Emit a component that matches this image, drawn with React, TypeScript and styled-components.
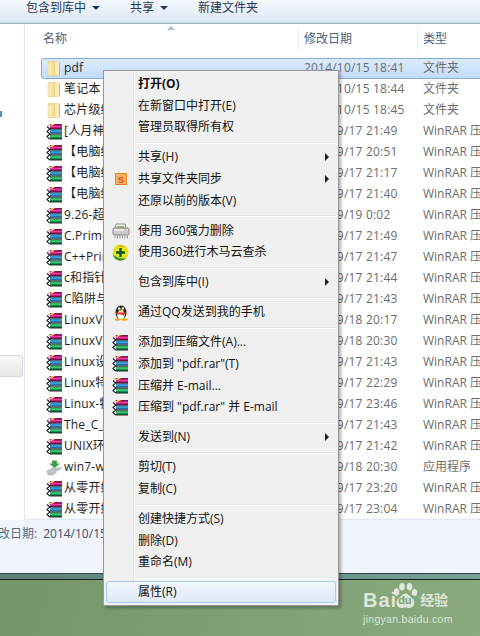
import styled, { createGlobalStyle } from "styled-components";

const FONT = `"Open Sans", "Noto Sans CJK SC", sans-serif`;

const GlobalStyle = createGlobalStyle`
  html, body {
    margin: 0;
    padding: 0;
    overflow: hidden;
    background: #7f9f74;
  }
`;

const rows = [
  { icon: "folder", name: "笔记本", date: "2014/10/15 18:44", type: "文件夹" },
  { icon: "folder", name: "芯片级维修", date: "2014/10/15 18:45", type: "文件夹" },
  { icon: "rar", name: "[人月神话", date: "2014/9/17 21:49", type: "WinRAR 压缩文件" },
  { icon: "rar", name: "【电脑维修", date: "2014/9/17 20:51", type: "WinRAR 压缩文件" },
  { icon: "rar", name: "【电脑维修", date: "2014/9/17 21:17", type: "WinRAR 压缩文件" },
  { icon: "rar", name: "【电脑维修", date: "2014/9/17 21:40", type: "WinRAR 压缩文件" },
  { icon: "rar", name: "9.26-超级", date: "2014/9/19 0:02", type: "WinRAR 压缩文件" },
  { icon: "rar", name: "C.Primer", date: "2014/9/17 21:49", type: "WinRAR 压缩文件" },
  { icon: "rar", name: "C++Primer", date: "2014/9/17 21:47", type: "WinRAR 压缩文件" },
  { icon: "rar", name: "c和指针", date: "2014/9/17 21:44", type: "WinRAR 压缩文件" },
  { icon: "rar", name: "C陷阱与缺陷", date: "2014/9/17 21:43", type: "WinRAR 压缩文件" },
  { icon: "rar", name: "LinuxVI", date: "2014/9/18 20:17", type: "WinRAR 压缩文件" },
  { icon: "rar", name: "LinuxVI", date: "2014/9/18 20:30", type: "WinRAR 压缩文件" },
  { icon: "rar", name: "Linux设备", date: "2014/9/17 21:43", type: "WinRAR 压缩文件" },
  { icon: "rar", name: "Linux特性", date: "2014/9/17 22:29", type: "WinRAR 压缩文件" },
  { icon: "rar", name: "Linux-特性", date: "2014/9/17 23:46", type: "WinRAR 压缩文件" },
  { icon: "rar", name: "The_C_", date: "2014/9/17 21:43", type: "WinRAR 压缩文件" },
  { icon: "rar", name: "UNIX环境", date: "2014/9/17 21:42", type: "WinRAR 压缩文件" },
  { icon: "setup", name: "win7-w", date: "2014/9/18 20:30", type: "应用程序" },
  { icon: "rar", name: "从零开始", date: "2014/9/17 23:20", type: "WinRAR 压缩文件" },
  { icon: "rar", name: "从零开始", date: "2014/9/17 23:04", type: "WinRAR 压缩文件" }
];

const menuGroups = [
  [
    { label: "打开(O)", bold: true },
    { label: "在新窗口中打开(E)" },
    { label: "管理员取得所有权" }
  ],
  [
    { label: "共享(H)", arrow: true },
    { label: "共享文件夹同步", icon: "sync", arrow: true },
    { label: "还原以前的版本(V)" }
  ],
  [
    { label: "使用 360强力删除", icon: "shredder" },
    { label: "使用360进行木马云查杀", icon: "shield" }
  ],
  [{ label: "包含到库中(I)", arrow: true }],
  [{ label: "通过QQ发送到我的手机", icon: "qq" }],
  [
    { label: "添加到压缩文件(A)...", icon: "rar" },
    { label: "添加到 \"pdf.rar\"(T)", icon: "rar" },
    { label: "压缩并 E-mail...", icon: "rar" },
    { label: "压缩到 \"pdf.rar\" 并 E-mail", icon: "rar" }
  ],
  [{ label: "发送到(N)", arrow: true }],
  [{ label: "剪切(T)" }, { label: "复制(C)" }],
  [
    { label: "创建快捷方式(S)" },
    { label: "删除(D)" },
    { label: "重命名(M)" }
  ],
  [{ label: "属性(R)", active: true }]
] as {
  label: string;
  bold?: boolean;
  arrow?: boolean;
  icon?: string;
  active?: boolean;
}[][];

const FolderIcon = () => (
  <svg width="16" height="17" viewBox="0 0 16 17">
    <defs>
      <linearGradient id="fold" x1="0" x2="1" y1="0" y2="0">
        <stop offset="0" stopColor="#fbf2c0" />
        <stop offset="1" stopColor="#f1dc92" />
      </linearGradient>
    </defs>
    <path d="M2 1.500h11.500v14H2z" fill="#e4c678" />
    <path d="M8.500 2h4.500v13h-4.500z" fill="#f8ecb8" />
    <path d="M2 2.500l6.500 -1.500v14.500H2z" fill="url(#fold)" stroke="#e2c77f" strokeWidth="0.5" />
    <path d="M13.500 2v13.500" stroke="#d0ae5c" strokeWidth="0.8" />
  </svg>
);

const RarIcon = () => (
  <svg width="17" height="17" viewBox="0 0 17 17">
    <path d="M1 3.500L4 1h12v5H4z" fill="#7d1557" />
    <rect x="4" y="2" width="12" height="4" fill="#b4186f" />
    <rect x="4" y="3" width="12" height="1.200" fill="#ec3fa4" />
    <path d="M3 2.500l3 -1.500h3l-3 2z" fill="#e9d44c" />
    <rect x="4" y="6.500" width="12" height="4" fill="#1f6fae" />
    <rect x="4" y="7.500" width="12" height="1.200" fill="#4fb2e6" />
    <rect x="4" y="11.500" width="12" height="4.500" fill="#0f8e4a" />
    <rect x="4" y="12.500" width="12" height="1.200" fill="#58d488" />
    <path d="M4 6H16M4 11H16M4 16H16" stroke="#111" strokeWidth="0.9" />
    <path d="M1 3.500L4 6 1 8.500 4 11 1 13.500 4 16" fill="none" stroke="#1a1a1a" strokeWidth="1.100" />
    <path d="M1 3.500L4 1v5zM1 8.500L4 6v5zM1 13.500L4 11v5z" fill="#f4f4f4" fillOpacity="0.85" />
    <path d="M1 3.500L4 6 1 8.500 4 11 1 13.500 4 16" fill="none" stroke="#1a1a1a" strokeWidth="0.900" />
  </svg>
);

const SetupIcon = () => (
  <svg width="17" height="17" viewBox="0 0 17 17">
    <path d="M1 12l6 -3h9l-4 2.500H8.500l2 1.500L7 16H2z" fill="#c0c4c4" stroke="#9a9e9e" strokeWidth="0.500" />
    <path d="M6 1.500h5v3h3l-5.500 4.500L3 4.500h3z" fill="#3f9a4b" stroke="#b5d2b8" strokeWidth="0.500" />
  </svg>
);

const SyncIcon = () => (
  <svg width="16" height="16" viewBox="0 0 16 16">
    <rect x="1" y="1" width="14" height="14" fill="#fff" />
    <rect x="2.500" y="2.500" width="11" height="11" fill="#f4b36a" stroke="#e77d12" />
    <text x="8" y="11.500" fontSize="9" fontWeight="700" textAnchor="middle" fill="#c9510c" fontFamily="Liberation Sans, sans-serif">
      S
    </text>
  </svg>
);

const ShredderIcon = () => (
  <svg width="18" height="16" viewBox="0 0 18 16">
    <path d="M4 1h9l1 4H3z" fill="#ececec" stroke="#949494" />
    <rect x="5" y="3" width="7" height="2" fill="#a9b77c" />
    <rect x="1" y="5" width="16" height="7" rx="1.500" fill="#c9cccc" stroke="#868686" />
    <rect x="2" y="6" width="14" height="2" fill="#eeeeee" />
    <path d="M3 12.500v3M5.500 12.500v3M8 12.500v3M10.500 12.500v3M13 12.500v3M15.500 12.500v3" stroke="#979797" />
    <path d="M12 7h3" stroke="#d88" />
  </svg>
);

const ShieldIcon = () => (
  <svg width="17" height="17" viewBox="0 0 17 17">
    <circle cx="8.500" cy="8.500" r="8" fill="#e3e21f" />
    <path d="M0.800 10.500a8 8 0 0 0 13.500 3.800C9 15 5 14 0.800 10.500z" fill="#3f9426" />
    <path d="M5 2a8 8 0 0 1 8 1.500C10 2.500 7.500 2.500 5 2z" fill="#d58a16" />
    <path d="M7.300 4h2.400v3.300H13v2.400H9.700V13H7.300V9.700H4V7.300h3.300z" fill="#15561a" />
  </svg>
);

const QqIcon = () => (
  <svg width="16" height="17" viewBox="0 0 16 17">
    <ellipse cx="8" cy="8.500" rx="5.500" ry="7" fill="#1c1c1c" />
    <ellipse cx="8" cy="11" rx="3.800" ry="4.500" fill="#fff" />
    <circle cx="6.200" cy="4.500" r="1.200" fill="#fff" />
    <circle cx="9.800" cy="4.500" r="1.200" fill="#fff" />
    <ellipse cx="8" cy="6.500" rx="2.600" ry="1" fill="#f0b020" />
    <path d="M3 8.500h10l.5 1.300-2.500 .7v2l-1.500 -1.800-6.500 -.7z" fill="#e02a1c" />
    <ellipse cx="4.500" cy="15.500" rx="3" ry="1.300" fill="#f0a818" />
    <ellipse cx="11.500" cy="15.500" rx="3" ry="1.300" fill="#f0a818" />
  </svg>
);

const PawIcon = () => (
  <svg width="25" height="26" viewBox="0 0 25 26" fill="#fff" fillOpacity="0.72">
    <ellipse cx="3.500" cy="9" rx="2.800" ry="3.800" />
    <ellipse cx="9" cy="3.800" rx="2.800" ry="3.800" />
    <ellipse cx="16.500" cy="3.800" rx="2.800" ry="3.800" />
    <ellipse cx="21.500" cy="9.500" rx="2.800" ry="3.600" />
    <path d="M12.500 10.500c3.500 0 4.500 3.500 7 5 3.500 2.500 2 9-3 9.500-1.500 0-2.500-.8-4-.8s-2.500 .8-4.500 .8c-5-.5-6-7-2.500-9.500 2.500-1.500 3.500-5 7-5z" />
  </svg>
);

const iconFor = (name?: string) => {
  switch (name) {
    case "folder":
      return <FolderIcon />;
    case "rar":
      return <RarIcon />;
    case "setup":
      return <SetupIcon />;
    case "sync":
      return <SyncIcon />;
    case "shredder":
      return <ShredderIcon />;
    case "shield":
      return <ShieldIcon />;
    case "qq":
      return <QqIcon />;
    default:
      return null;
  }
};

const App = () => (
  <Page>
    <GlobalStyle />
    <Toolbar>
      <ToolButton $width={104}>
        包含到库中 <Caret />
      </ToolButton>
      <ToolButton $width={68}>
        共享 <Caret />
      </ToolButton>
      <ToolButton>新建文件夹</ToolButton>
    </Toolbar>
    <Explorer>
      <NavPane>
        <NavMark />
        <NavSelected />
      </NavPane>
      <Content>
        <HeaderRow>
          <SortArrow />
          <HeaderCell>名称</HeaderCell>
          <HeaderCell $divider>修改日期</HeaderCell>
          <HeaderCell $divider>类型</HeaderCell>
        </HeaderRow>
        <FileRow $selected>
          <NameCell>
            <IconSlot>
              <FolderIcon />
            </IconSlot>
            pdf
          </NameCell>
          <DateCell>2014/10/15 18:41</DateCell>
          <TypeCell>文件夹</TypeCell>
        </FileRow>
        {rows.map((row, i) => (
          <FileRow key={i}>
            <NameCell>
              <IconSlot>{iconFor(row.icon)}</IconSlot>
              {row.name}
            </NameCell>
            <DateCell>{row.date}</DateCell>
            <TypeCell>{row.type}</TypeCell>
          </FileRow>
        ))}
      </Content>
    </Explorer>
    <Details>
      <DetailLabel>修改日期:</DetailLabel>
      <DetailValue>2014/10/15 18:41</DetailValue>
    </Details>
    <WindowEdge />
    <Desktop />

    <Menu>
      {menuGroups.map((group, g) => (
        <div key={g}>
          {g > 0 && <MenuSeparator />}
          {group.map((item) => (
            <MenuItem key={item.label} $active={item.active}>
              <MenuIcon>{iconFor(item.icon)}</MenuIcon>
              <MenuLabel $bold={item.bold}>{item.label}</MenuLabel>
              {item.arrow && <MenuArrow />}
            </MenuItem>
          ))}
        </div>
      ))}
    </Menu>

    <Watermark>
      <BrandLine>
        <BrandText>Bai</BrandText>
        <PawBox>
          <PawIcon />
          <PawText>du</PawText>
        </PawBox>
        <BrandCn>经验</BrandCn>
      </BrandLine>
      <BrandUrl>jingyan.baidu.com</BrandUrl>
    </Watermark>
  </Page>
);

const Page = styled.div`
  position: relative;
  width: 480px;
  height: 636px;
  overflow: hidden;
  display: flex;
  flex-direction: column;
  font: 12px/16px ${FONT};
  background: #fff;
`;

const Toolbar = styled.div`
  flex: 0 0 24px;
  box-sizing: border-box;
  display: flex;
  align-items: flex-start;
  padding: 0 0 0 26px;
  background: linear-gradient(#f4f8fc, #dce7f4);
  border-bottom: 1px solid #a5b3c6;
  box-shadow: inset 0 -1px 0 #c6d3e3;
  color: #1e395b;
`;

const ToolButton = styled.div<{ $width?: number }>`
  width: ${(p) => (p.$width ? `${p.$width}px` : "auto")};
  display: flex;
  align-items: center;
  gap: 6px;
  height: 15px;
  font-size: 12px;
`;

const Caret = styled.span`
  width: 0;
  height: 0;
  border-left: 4px solid transparent;
  border-right: 4px solid transparent;
  border-top: 4px solid #1e395b;
`;

const Explorer = styled.div`
  flex: 0 0 494px;
  display: flex;
  background: #fff;
  box-shadow: inset 0 -2px 2px -1px #d6e0f0;
`;

const NavPane = styled.div`
  position: relative;
  flex: 0 0 24px;
  border-right: 1px solid #d9e6f4;
  background: #fff;
`;

const NavMark = styled.div`
  position: absolute;
  left: 0;
  top: 87px;
  width: 2px;
  height: 6px;
  background: #4d8ecb;
`;

const NavSelected = styled.div`
  position: absolute;
  left: 0;
  top: 331px;
  width: 23px;
  height: 22px;
  box-sizing: border-box;
  border: 1px solid #d9d9d9;
  border-left: 0;
  border-radius: 0 3px 3px 0;
  background: linear-gradient(#f8f8f8, #e8e8e8);
`;

const Content = styled.div`
  flex: 1;
  min-width: 0;
  overflow: hidden;
`;

const HeaderRow = styled.div`
  position: relative;
  height: 34px;
  display: grid;
  grid-template-columns: 273px 119px 1fr;
  align-items: center;
  color: #4c607a;
`;

const SortArrow = styled.span`
  position: absolute;
  left: 142px;
  top: 2px;
  width: 0;
  height: 0;
  border-left: 4px solid transparent;
  border-right: 4px solid transparent;
  border-bottom: 4px solid #a6c0dc;
`;

const HeaderCell = styled.div<{ $divider?: boolean }>`
  height: 24px;
  line-height: 24px;
  margin-top: -4px;
  padding-left: ${(p) => (p.$divider ? "5px" : "18px")};
  border-left: ${(p) => (p.$divider ? "1px solid #e8eef5" : "0")};
  font-size: 12px;
`;

const FileRow = styled.div<{ $selected?: boolean }>`
  height: 21px;
  box-sizing: border-box;
  margin-left: 16px;
  margin-right: -4px;
  padding-bottom: 1px;
  display: grid;
  grid-template-columns: 257px 119px 1fr;
  align-items: center;
  white-space: nowrap;
  border: 1px solid ${(p) => (p.$selected ? "#84acdd" : "transparent")};
  border-radius: 3px;
  background: ${(p) =>
    p.$selected ? "linear-gradient(#dcebfc, #c2dcfd)" : "transparent"};
`;

const NameCell = styled.div`
  display: flex;
  align-items: center;
  color: #1e1e1e;
  overflow: hidden;
  letter-spacing: 0.2px;
`;

const IconSlot = styled.span`
  flex: 0 0 22px;
  display: flex;
  justify-content: center;
  padding-left: 2px;
  box-sizing: border-box;
`;

const DateCell = styled.div`
  padding-left: 5px;
  color: #6d6d6d;
  letter-spacing: 0.2px;
`;

const TypeCell = styled.div`
  padding-left: 5px;
  color: #6d6d6d;
`;

const Details = styled.div`
  flex: 0 0 53px;
  box-sizing: border-box;
  display: flex;
  gap: 6px;
  padding-top: 6px;
  background: #f0f4fc;
  white-space: nowrap;
  overflow: hidden;
`;

const DetailLabel = styled.span`
  margin-left: -14px;
  color: #5b6b80;
`;

const DetailValue = styled.span`
  color: #3b4c68;
`;

const WindowEdge = styled.div`
  flex: 0 0 7px;
  box-sizing: border-box;
  background: linear-gradient(90deg, #5f8078, #76a09b);
  border-top: 1px solid #33443f;
  border-bottom: 1px solid #14201c;
`;

const Desktop = styled.div`
  flex: 1;
  background: linear-gradient(100deg, #74966b, #8aaa7e);
`;

const Menu = styled.div`
  position: absolute;
  left: 103px;
  top: 70px;
  width: 236px;
  height: 536px;
  box-sizing: border-box;
  padding: 2px 2px 0;
  border: 1px solid #979797;
  background: linear-gradient(90deg, #f0f0f0 29px, #e6e6e6 29px, #e6e6e6 30px, #fbfbfb 30px, #fbfbfb 31px, #f0f0f0 31px);
  box-shadow: 2px 2px 3px rgba(0, 0, 0, 0.3);
`;

const MenuItem = styled.div<{ $active?: boolean }>`
  height: 21.7px;
  box-sizing: border-box;
  display: flex;
  align-items: center;
  color: #111;
  border-radius: 3px;
  border: 1px solid ${(p) => (p.$active ? "#a9cdf2" : "transparent")};
  background: ${(p) =>
    p.$active ? "linear-gradient(#f2f6fc, #e0e9f7)" : "transparent"};
`;

const MenuIcon = styled.span`
  flex: 0 0 31px;
  display: flex;
  justify-content: center;
  padding-right: 4px;
  box-sizing: border-box;
`;

const MenuLabel = styled.span<{ $bold?: boolean }>`
  font-weight: ${(p) => (p.$bold ? 700 : 400)};
  white-space: nowrap;
`;

const MenuArrow = styled.span`
  margin-left: auto;
  margin-right: 6px;
  width: 0;
  height: 0;
  border-top: 4px solid transparent;
  border-bottom: 4px solid transparent;
  border-left: 4px solid #222;
`;

const MenuSeparator = styled.div`
  height: 2px;
  margin: 4px 0 2.300px 30px;
  background: linear-gradient(#e2e3e3 50%, #fff 50%);
`;

const Watermark = styled.div`
  position: absolute;
  left: 363px;
  top: 583px;
  color: rgba(255, 255, 255, 0.72);
  font-family: "Liberation Sans", "Noto Sans CJK SC", sans-serif;
`;

const BrandLine = styled.div`
  display: flex;
  align-items: flex-end;
  height: 26px;
`;

const BrandText = styled.span`
  font-size: 20px;
  line-height: 18px;
  font-weight: 700;
  letter-spacing: 1px;
`;

const PawBox = styled.span`
  position: relative;
  display: flex;
  margin: 0 2px 0 -4px;
`;

const PawText = styled.span`
  position: absolute;
  left: 5px;
  bottom: 3px;
  color: #7f9f74;
  font-size: 11px;
  line-height: 12px;
  font-weight: 700;
`;

const BrandCn = styled.span`
  font-size: 14px;
  line-height: 18px;
  font-weight: 700;
`;

const BrandUrl = styled.div`
  margin-top: 4px;
  font-size: 10.500px;
  line-height: 12px;
  letter-spacing: 0.3px;
`;

export default App;
